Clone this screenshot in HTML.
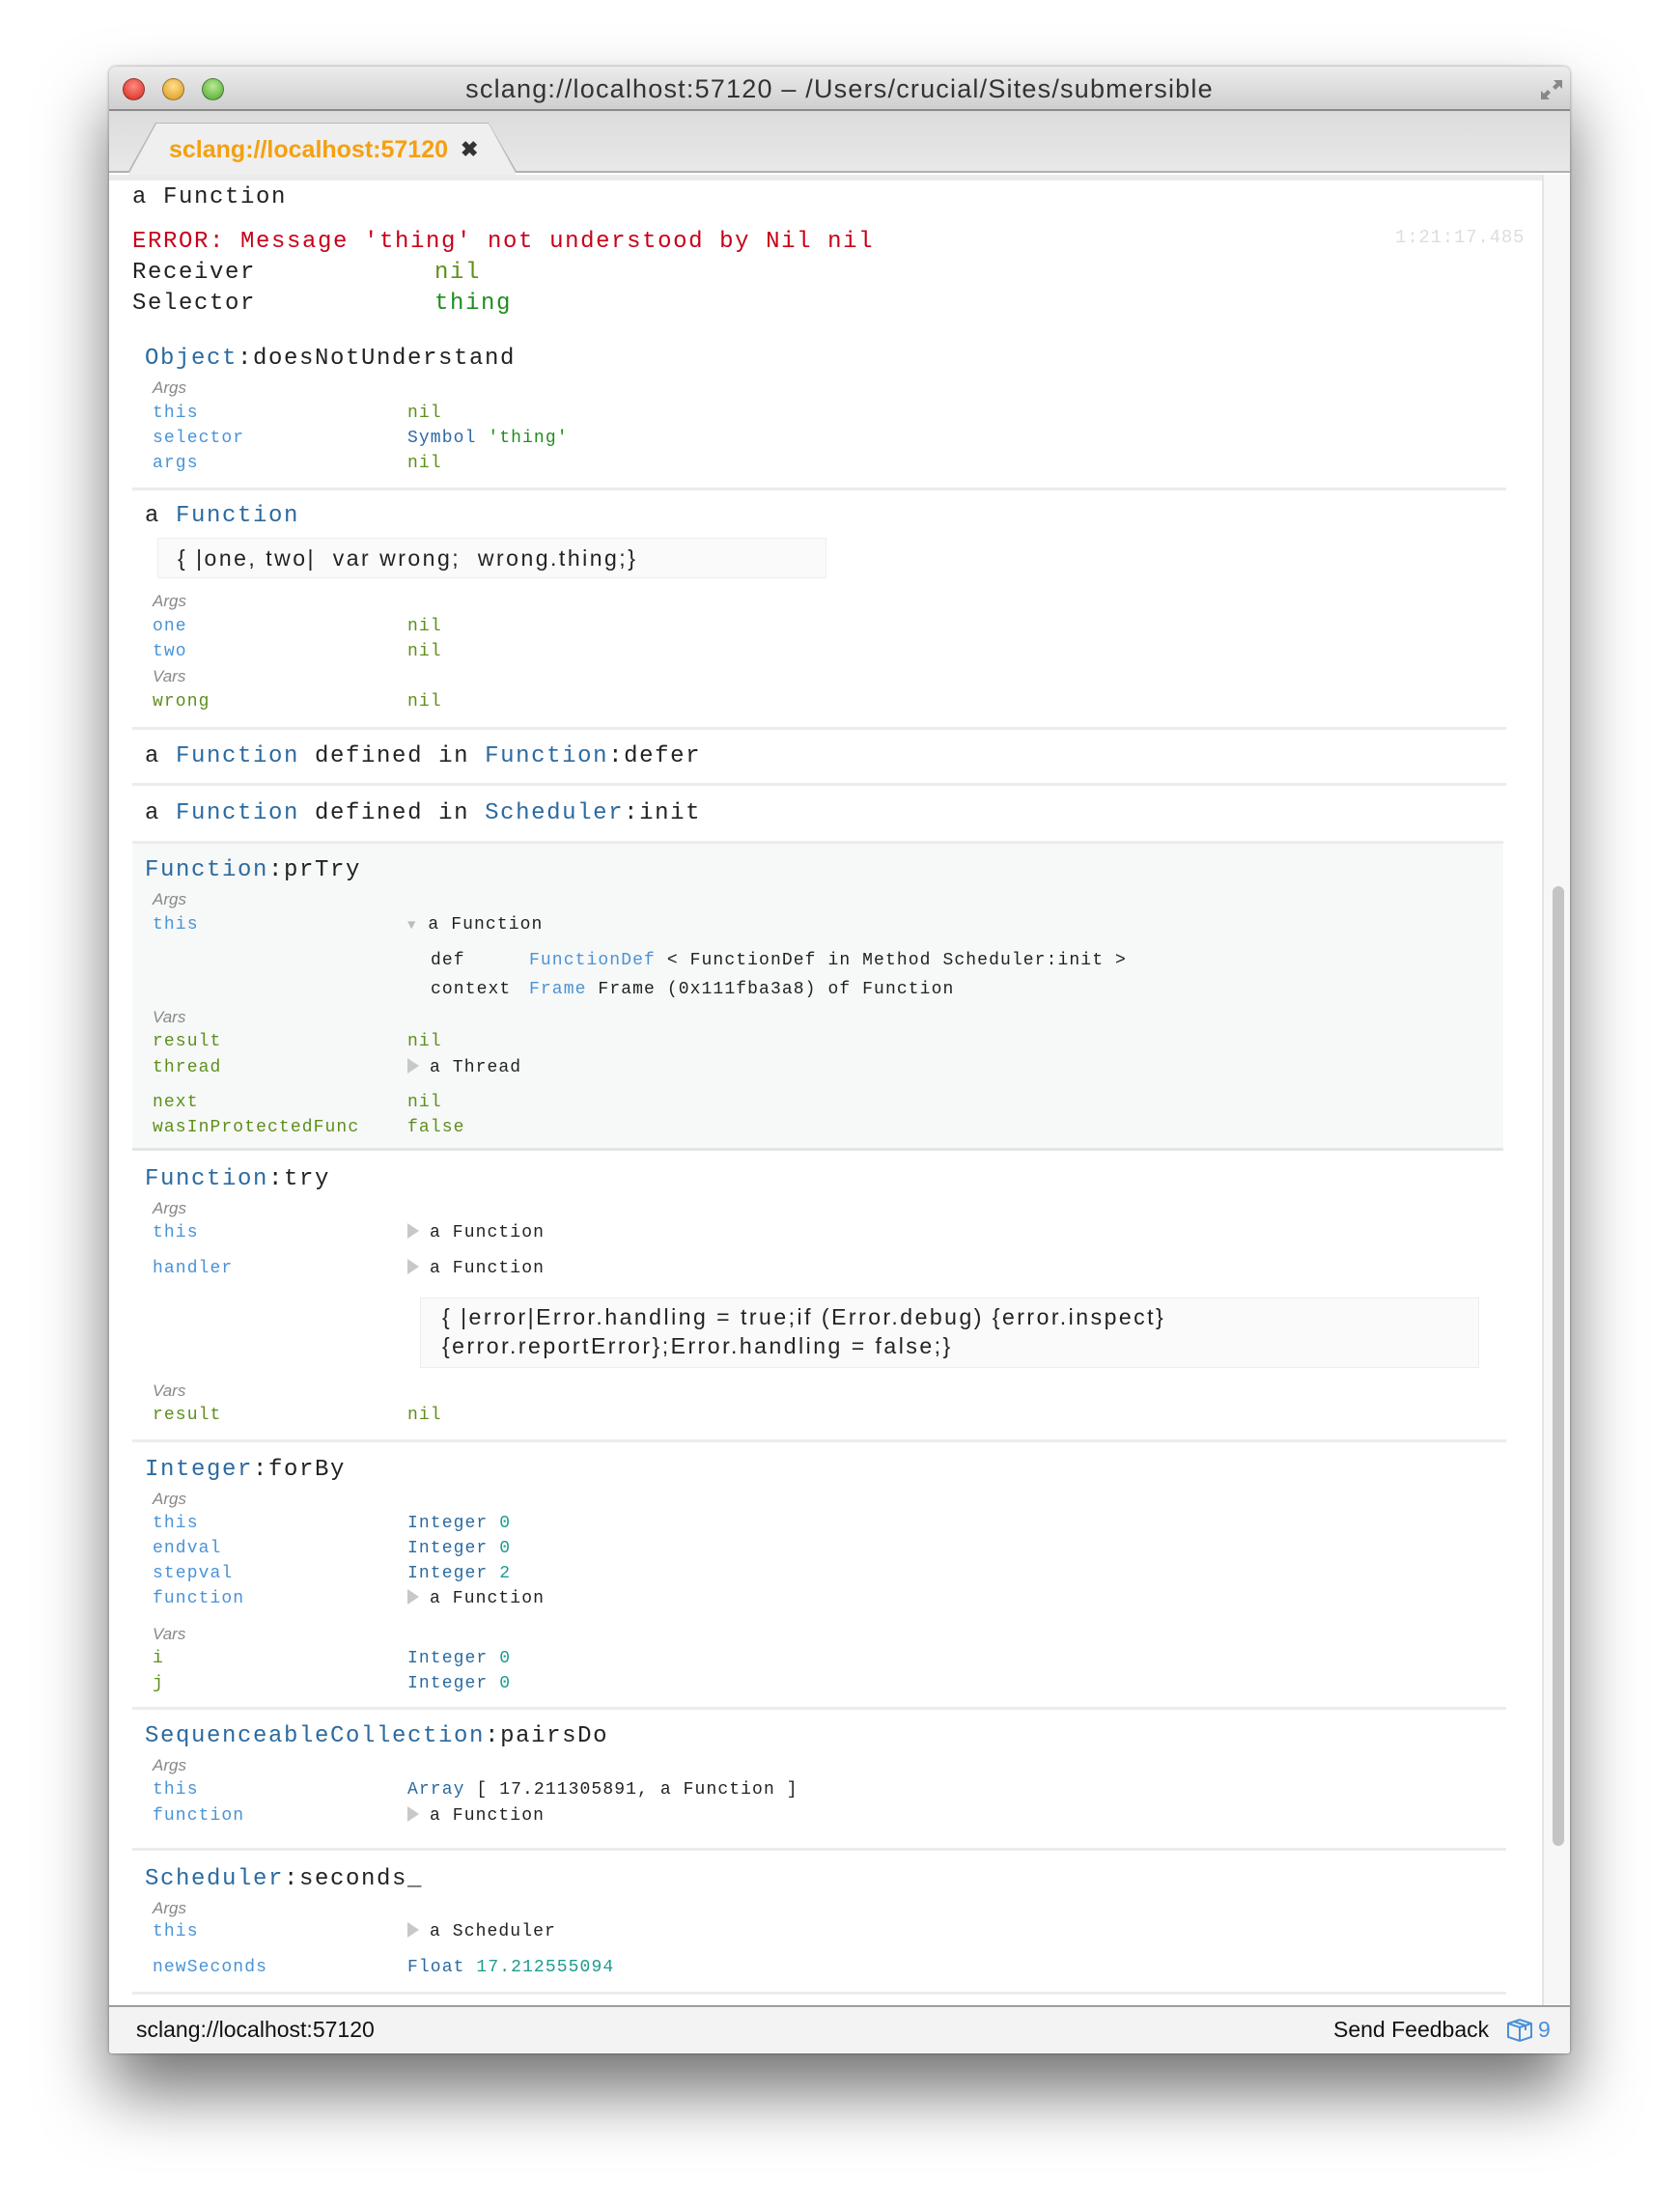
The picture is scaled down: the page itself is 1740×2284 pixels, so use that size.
<!DOCTYPE html>
<html><head><meta charset="utf-8"><style>
*{margin:0;padding:0;box-sizing:border-box}
body{width:1740px;height:2284px;background:#fff;position:relative;overflow:hidden;font-family:"Liberation Sans",sans-serif}
.win{position:absolute;left:113px;top:69px;width:1513px;height:2058px;background:#fff;border-radius:7px 7px 3px 3px;box-shadow:0 40px 70px rgba(0,0,0,.55),0 0 3px rgba(0,0,0,.4);overflow:hidden}
.title{position:absolute;left:0;top:0;width:100%;height:46px;background:linear-gradient(#ececec,#cfcfcf);border-bottom:2px solid #8a8a8a;text-align:center;font-size:27px;letter-spacing:1.2px;line-height:46px;color:#333}
.light{position:absolute;top:12px;width:23px;height:23px;border-radius:50%;border:1px solid rgba(0,0,0,.35)}
.tabbar{position:absolute;left:0;top:46px;width:100%;height:64px;background:linear-gradient(#dcdcdc,#e8e8e8);border-bottom:2px solid #b0b0b0}
.tabo{position:absolute;left:19px;top:58px;width:404px;height:52px;background:#b8b8b8;clip-path:polygon(0 100%,29px 0,374px 0,404px 100%)}
.tab{position:absolute;left:20px;top:59px;width:402px;height:53px;background:#efefef;clip-path:polygon(0 100%,29px 0,373px 0,402px 100%)}
.tabt{position:absolute;left:62px;top:71px;font-size:25px;font-weight:bold;color:#f5a00f;line-height:30px}
.tabx{position:absolute;left:364px;top:71px;font-size:22px;color:#333;line-height:30px;font-weight:bold}
.content{position:absolute;left:0;top:112px;width:1484px;height:1896px;background:#fff;border-top:6px solid #ebebeb}
.sb{position:absolute;left:1484px;top:112px;width:29px;height:1896px;background:#f7f7f7;border-left:2px solid #e4e4e4}
.thumb{position:absolute;left:9px;top:737px;width:12px;height:994px;border-radius:6px;background:#c4c4c4}
.status{position:absolute;left:0;top:2008px;width:100%;height:50px;background:#f3f3f3;border-top:2px solid #9e9e9e;font-size:23px;line-height:46px;color:#111}
.t{position:absolute;white-space:pre;font-family:"Liberation Mono",monospace}
.b{font-size:24px;letter-spacing:1.6px;line-height:30px;color:#222}
.s{font-size:18px;letter-spacing:1.1px;line-height:24px;color:#222}
.h{font-family:"Liberation Sans",sans-serif;font-style:italic;font-size:17px;color:#888;line-height:22px;position:absolute}
.p{font-family:"Liberation Sans",sans-serif;font-size:23px;letter-spacing:2.5px;color:#222;line-height:28px;position:absolute;white-space:pre}
.cb{color:#2b6aa0}.lb{color:#4a93d6}.g{color:#5d8f1c}.gg{color:#1e8e1e}.r{color:#c8001a}.tl{color:#1d9b8f}
.hr{position:absolute;left:24px;width:1423px;height:3px;background:#ececec}
.tri{display:inline-block;width:0;height:0;border-top:8px solid transparent;border-bottom:8px solid transparent;border-left:12px solid #c8c8c8;vertical-align:-2px;margin-right:11px}
.wrap{position:absolute;left:0;top:3px;width:1740px;height:2200px}
</style></head><body>
<div class="win">
 <div class="title">sclang://localhost:57120 – /Users/crucial/Sites/submersible
  <div class="light" style="left:14px;background:radial-gradient(circle at 50% 35%,#ff8a7f,#d5261b)"></div>
  <div class="light" style="left:55px;background:radial-gradient(circle at 50% 35%,#ffe08a,#d8941a)"></div>
  <div class="light" style="left:96px;background:radial-gradient(circle at 50% 35%,#b6ec92,#4da42c)"></div>
  <svg style="position:absolute;left:1480px;top:10px" width="28" height="28" viewBox="0 0 28 28"><path d="M16 4h9v9l-3-3-4 4-3-3 4-4zM12 24H3v-9l3 3 4-4 3 3-4 4z" fill="#888"/></svg>
 </div>
 <div class="tabbar"></div>
 <div class="tabo"></div>
 <div class="tab"></div>
 <div class="tabt">sclang://localhost:57120</div>
 <div class="tabx">✖</div>
 <div class="content"></div>
 <div class="sb"><div class="thumb"></div></div>
 <div class="status"><span style="position:absolute;left:28px">sclang://localhost:57120</span><span style="position:absolute;left:1268px">Send Feedback</span>
  <svg style="position:absolute;left:1447px;top:11px" width="28" height="26" viewBox="0 0 28 26"><path d="M2 6l12-4 12 4v14l-12 4-12-4zM2 6l12 4 12-4M14 10v14M8 4l12 4v5" fill="none" stroke="#4a90d9" stroke-width="2"/></svg>
  <span style="position:absolute;left:1480px;color:#4a90d9">9</span></div>
</div>
<div class="wrap">
<div class="t b" style="left:137px;top:187px">a Function</div>
<div class="t s" style="left:1445px;top:231px;color:#ddd;font-size:19px;letter-spacing:0.8px">1:21:17.485</div>
<div class="t b r" style="left:137px;top:233px">ERROR: Message 'thing' not understood by Nil nil</div>
<div class="t b" style="left:137px;top:265px">Receiver</div><div class="t b g" style="left:450px;top:265px">nil</div>
<div class="t b" style="left:137px;top:297px">Selector</div><div class="t b gg" style="left:450px;top:297px">thing</div>

<div class="t b" style="left:150px;top:354px"><span class="cb">Object</span>:doesNotUnderstand</div>
<div class="h" style="left:158px;top:388px">Args</div>
<div class="t s lb" style="left:158px;top:413px">this</div><div class="t s g" style="left:422px;top:413px">nil</div>
<div class="t s lb" style="left:158px;top:439px">selector</div><div class="t s" style="left:422px;top:439px"><span class="cb">Symbol</span> <span class="gg">'thing'</span></div>
<div class="t s lb" style="left:158px;top:465px">args</div><div class="t s g" style="left:422px;top:465px">nil</div>
<div class="hr" style="left:137px;top:502px"></div>

<div class="t b" style="left:150px;top:517px">a <span class="cb">Function</span></div>
<div style="position:absolute;left:163px;top:554px;width:693px;height:42px;background:#fafafa;border:1px solid #eee"></div>
<div class="p" style="left:184px;top:561px">{ |one, two|  var wrong;  wrong.thing;}</div>
<div class="h" style="left:158px;top:609px">Args</div>
<div class="t s lb" style="left:158px;top:634px">one</div><div class="t s g" style="left:422px;top:634px">nil</div>
<div class="t s lb" style="left:158px;top:660px">two</div><div class="t s g" style="left:422px;top:660px">nil</div>
<div class="h" style="left:158px;top:687px">Vars</div>
<div class="t s g" style="left:158px;top:712px">wrong</div><div class="t s g" style="left:422px;top:712px">nil</div>
<div class="hr" style="left:137px;top:750px"></div>
<div class="t b" style="left:150px;top:766px">a <span class="cb">Function</span> defined in <span class="cb">Function</span>:defer</div>
<div class="hr" style="left:137px;top:808px"></div>
<div class="t b" style="left:150px;top:825px">a <span class="cb">Function</span> defined in <span class="cb">Scheduler</span>:init</div>

<div style="position:absolute;left:137px;top:868px;width:1420px;height:321px;background:#f7f8f8;border-top:3px solid #ececec;border-bottom:3px solid #e4e4e4"></div>
<div class="t b" style="left:150px;top:884px"><span class="cb">Function</span>:prTry</div>
<div class="h" style="left:158px;top:918px">Args</div>
<div class="t s lb" style="left:158px;top:943px">this</div><div class="t s" style="left:422px;top:943px"><span style="color:#bbb;font-size:14px">▼</span> a Function</div>
<div class="t s" style="left:446px;top:980px">def</div><div class="t s" style="left:548px;top:980px"><span class="lb">FunctionDef</span> &lt; FunctionDef in Method Scheduler:init &gt;</div>
<div class="t s" style="left:446px;top:1010px">context</div><div class="t s" style="left:548px;top:1010px"><span class="lb">Frame</span> Frame (0x111fba3a8) of Function</div>
<div class="h" style="left:158px;top:1040px">Vars</div>
<div class="t s g" style="left:158px;top:1064px">result</div><div class="t s g" style="left:422px;top:1064px">nil</div>
<div class="t s g" style="left:158px;top:1091px">thread</div><div class="t s" style="left:422px;top:1091px"><span class="tri"></span>a Thread</div>
<div class="t s g" style="left:158px;top:1127px">next</div><div class="t s g" style="left:422px;top:1127px">nil</div>
<div class="t s g" style="left:158px;top:1153px">wasInProtectedFunc</div><div class="t s g" style="left:422px;top:1153px">false</div>

<div class="t b" style="left:150px;top:1204px"><span class="cb">Function</span>:try</div>
<div class="h" style="left:158px;top:1238px">Args</div>
<div class="t s lb" style="left:158px;top:1262px">this</div><div class="t s" style="left:422px;top:1262px"><span class="tri"></span>a Function</div>
<div class="t s lb" style="left:158px;top:1299px">handler</div><div class="t s" style="left:422px;top:1299px"><span class="tri"></span>a Function</div>
<div style="position:absolute;left:435px;top:1341px;width:1097px;height:73px;background:#fafafa;border:1px solid #eee"></div>
<div class="p" style="left:458px;top:1347px">{ |error|Error.handling = true;if (Error.debug) {error.inspect}</div>
<div class="p" style="left:458px;top:1377px">{error.reportError};Error.handling = false;}</div>
<div class="h" style="left:158px;top:1427px">Vars</div>
<div class="t s g" style="left:158px;top:1451px">result</div><div class="t s g" style="left:422px;top:1451px">nil</div>
<div class="hr" style="left:137px;top:1488px"></div>

<div class="t b" style="left:150px;top:1505px"><span class="cb">Integer</span>:forBy</div>
<div class="h" style="left:158px;top:1539px">Args</div>
<div class="t s lb" style="left:158px;top:1563px">this</div><div class="t s" style="left:422px;top:1563px"><span class="cb">Integer</span> <span class="tl">0</span></div>
<div class="t s lb" style="left:158px;top:1589px">endval</div><div class="t s" style="left:422px;top:1589px"><span class="cb">Integer</span> <span class="tl">0</span></div>
<div class="t s lb" style="left:158px;top:1615px">stepval</div><div class="t s" style="left:422px;top:1615px"><span class="cb">Integer</span> <span class="tl">2</span></div>
<div class="t s lb" style="left:158px;top:1641px">function</div><div class="t s" style="left:422px;top:1641px"><span class="tri"></span>a Function</div>
<div class="h" style="left:158px;top:1679px">Vars</div>
<div class="t s g" style="left:158px;top:1703px">i</div><div class="t s" style="left:422px;top:1703px"><span class="cb">Integer</span> <span class="tl">0</span></div>
<div class="t s g" style="left:158px;top:1729px">j</div><div class="t s" style="left:422px;top:1729px"><span class="cb">Integer</span> <span class="tl">0</span></div>
<div class="hr" style="left:137px;top:1765px"></div>

<div class="t b" style="left:150px;top:1781px"><span class="cb">SequenceableCollection</span>:pairsDo</div>
<div class="h" style="left:158px;top:1815px">Args</div>
<div class="t s lb" style="left:158px;top:1839px">this</div><div class="t s" style="left:422px;top:1839px"><span class="cb">Array</span> [ 17.211305891, a Function ]</div>
<div class="t s lb" style="left:158px;top:1866px">function</div><div class="t s" style="left:422px;top:1866px"><span class="tri"></span>a Function</div>
<div class="hr" style="left:137px;top:1911px"></div>

<div class="t b" style="left:150px;top:1929px"><span class="cb">Scheduler</span>:seconds_</div>
<div class="h" style="left:158px;top:1963px">Args</div>
<div class="t s lb" style="left:158px;top:1986px">this</div><div class="t s" style="left:422px;top:1986px"><span class="tri"></span>a Scheduler</div>
<div class="t s lb" style="left:158px;top:2023px">newSeconds</div><div class="t s" style="left:422px;top:2023px"><span class="cb">Float</span> <span class="tl">17.212555094</span></div>
<div class="hr" style="left:137px;top:2060px"></div>
</div>
</body></html>
